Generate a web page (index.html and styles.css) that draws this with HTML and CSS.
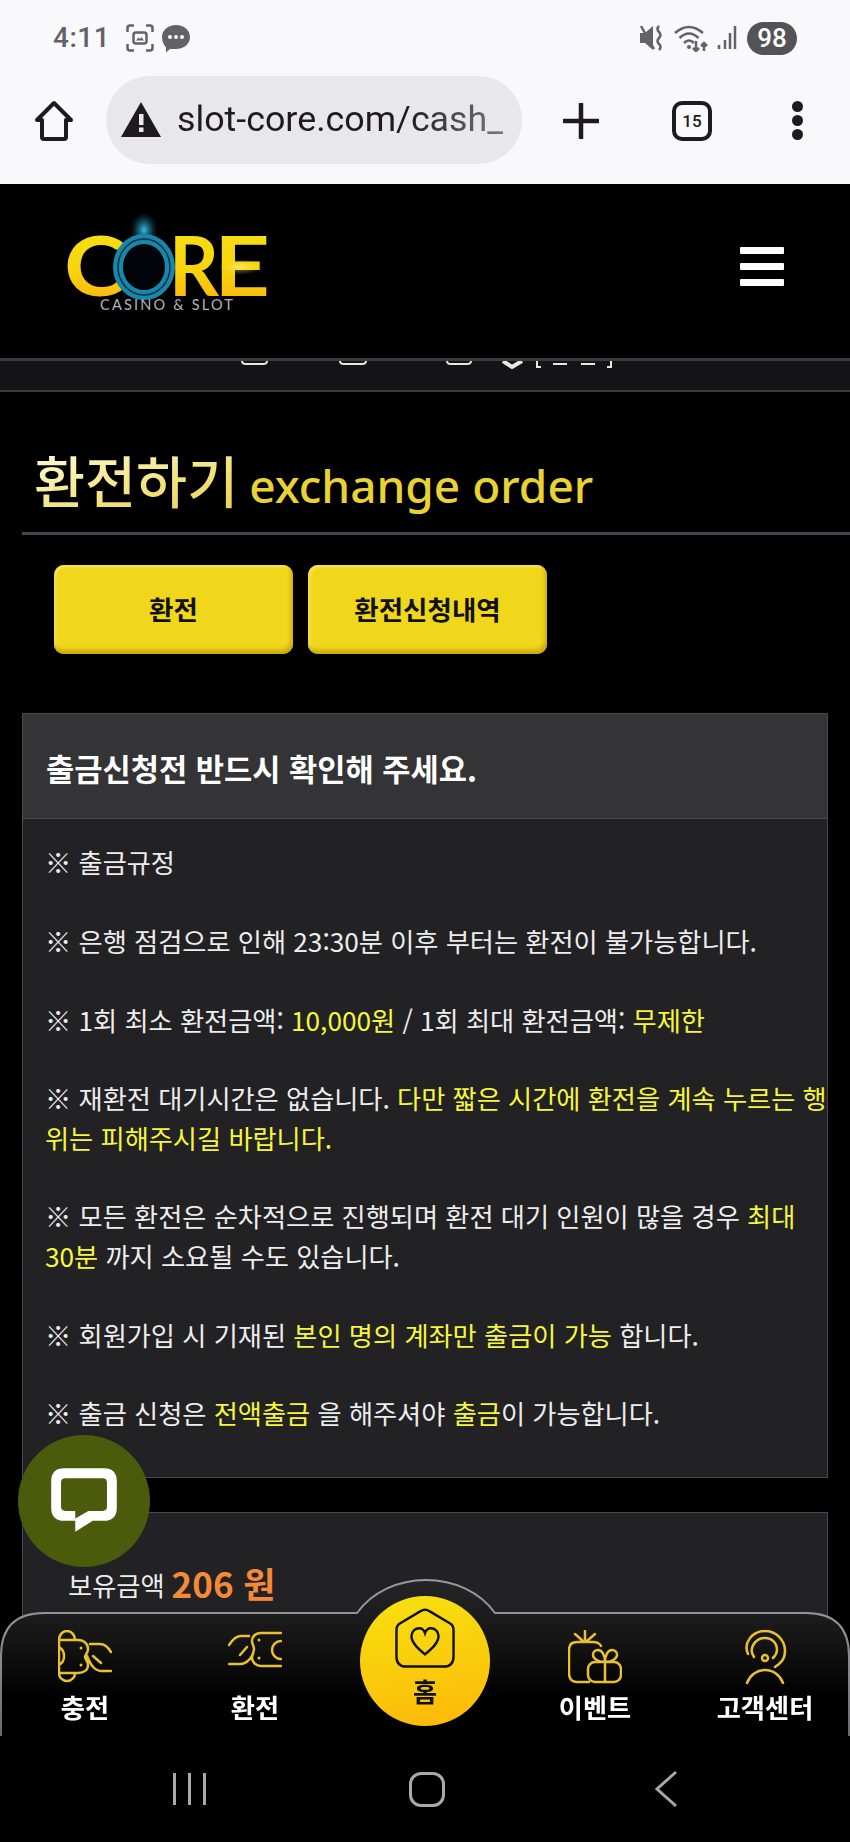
FILE: index.html
```html
<!DOCTYPE html>
<html lang="ko">
<head>
<meta charset="utf-8">
<title>환전하기</title>
<link rel="stylesheet" href="styles.css">
</head>
<body>
<div class="chrome">
  <div class="status">
    <div class="status-left">
      <span class="clock">4:11</span>
      <svg class="st-shot" viewBox="0 0 28 28"><path d="M1.5 8V4Q1.5 1.5 4 1.5H8M20 1.5H24Q26.500 1.500 26.500 4V8M26.500 20V24Q26.500 26.500 24 26.500H20M8 26.500H4Q1.500 26.500 1.500 24V20"/><rect x="7.500" y="8.500" width="13" height="11" rx="2.500"/><path class="fill" d="M10 16.500l2.500-3 1.500 1.500 1.500-2 2.500 3.500z"/></svg>
      <svg class="st-msg" viewBox="0 0 30 29"><path class="bubble" d="M15 1C23 1 29 6 29 13S23 25 15 25H9L5 28.500V23.500C3 21 1 17.500 1 13 1 6 7 1 15 1Z"/><circle cx="9" cy="13" r="2" fill="#f9f8fb"/><circle cx="15" cy="13" r="2" fill="#f9f8fb"/><circle cx="21" cy="13" r="2" fill="#f9f8fb"/></svg>
    </div>
    <div class="status-right">
      <svg class="st-mute" viewBox="0 0 24 26"><path class="fill" d="M0 8H5L13 1V25L5 18H0Z"/><path class="line" d="M1 1L14 24M19 1Q16 4 19 7T19 13T19 19T19 25"/></svg>
      <svg class="st-wifi" viewBox="0 0 35 28"><path class="line" d="M1 9Q15-3 29 9M5.500 14Q15 5 24.500 14M10 19Q15 14 20 19"/><circle class="fill" cx="15" cy="23" r="2"/><path class="line" d="M22 17V27M19 24L22 27 25 24M30 27V19M27 22L30 19 33 22"/></svg>
      <svg class="st-sig" viewBox="0 0 20 26"><path class="line" d="M2 20V24M8 15V24M13 8V24M18 1V24"/></svg>
      <span class="battery">98</span>
    </div>
  </div>
  <div class="toolbar">
    <svg class="tb-home" viewBox="0 0 42 42"><path d="M21 3L38 20H33V37Q33 39 31 39H11Q9 39 9 37V20H4Z"/></svg>
    <div class="url">
      <svg class="tb-warn" viewBox="0 0 40 36"><path fill="#1d1b20" d="M20 0L40 35H0Z"/><rect x="18" y="12" width="4.500" height="11" fill="#e8e7ea"/><rect x="18" y="25.500" width="4.500" height="4.500" fill="#e8e7ea"/></svg>
      <span class="url-text">slot-core.com/cash_</span>
    </div>
    <svg class="tb-plus" viewBox="0 0 36 36"><path d="M18 1V35M1 18H35"/></svg>
    <span class="tabs">15</span>
    <span class="dots"><i></i><i></i><i></i></span>
  </div>
</div>

<header class="site-head">
  <svg class="logo" viewBox="0 0 210 90" role="img" aria-label="CORE Casino &amp; Slot">
    <defs>
      <linearGradient id="gold" x1="0" y1="0" x2="0" y2="1"><stop offset="0" stop-color="#f4e413"/><stop offset=".55" stop-color="#f8d40e"/><stop offset="1" stop-color="#fcae0c"/></linearGradient>
      <radialGradient id="glow"><stop offset="0" stop-color="#3bbbe6"/><stop offset=".5" stop-color="#14627f" stop-opacity=".7"/><stop offset="1" stop-color="#0a3040" stop-opacity="0"/></radialGradient>
      <radialGradient id="flare"><stop offset="0" stop-color="#fff6b0"/><stop offset="1" stop-color="#f8d40e" stop-opacity="0"/></radialGradient>
    </defs>
    <ellipse cx="76" cy="-8" rx="14" ry="18" fill="url(#glow)"/>
    <text class="logo-l" x="-4" y="58" textLength="62" lengthAdjust="spacingAndGlyphs" fill="url(#gold)">C</text>
    <text class="logo-l" x="101" y="58" textLength="50" lengthAdjust="spacingAndGlyphs" fill="url(#gold)">R</text>
    <text class="logo-l" x="146" y="58" textLength="56" lengthAdjust="spacingAndGlyphs" fill="url(#gold)">E</text>
    <ellipse cx="76" cy="29" rx="26" ry="28" fill="#02040a" stroke="#1788ac" stroke-width="10"/>
    <ellipse cx="76" cy="29" rx="26" ry="28" fill="none" stroke="#08303f" stroke-width="1.500"/>
    <ellipse cx="172" cy="29" rx="22" ry="8" fill="url(#flare)" opacity=".55"/>
    <text class="logo-s" x="32" y="72">CASINO &amp; SLOT</text>
  </svg>
  <span class="burger"><i></i><i></i><i></i></span>
</header>
<div class="strip">
  <svg class="strip-marks" viewBox="0 0 380 8"><path d="M1 0Q1 3 5 3H22Q26 3 26 0M99 0Q99 3 103 3H121Q125 3 125 0M206 0Q206 3 210 3H226Q230 3 230 0"/><path class="thick" d="M262 0L271 6 281 0"/><path d="M296 0V6H300M312 3H326M340 3H354M366 6H370V0"/></svg>
</div>

<main class="page">
  <h1 class="title"><span class="title-ko">환전하기</span> <span class="title-en">exchange order</span></h1>
  <div class="tabs-row">
    <button class="gold-btn">환전</button>
    <button class="gold-btn">환전신청내역</button>
  </div>
  <section class="panel">
    <h2 class="panel-head">출금신청전 반드시 확인해 주세요.</h2>
    <div class="panel-body">
      <p>※ 출금규정</p>
      <p>※ 은행 점검으로 인해 23:30분 이후 부터는 환전이 불가능합니다.</p>
      <p>※ 1회 최소 환전금액: <em>10,000원</em> / 1회 최대 환전금액: <em>무제한</em></p>
      <p>※ 재환전 대기시간은 없습니다. <em>다만 짧은 시간에 환전을 계속 누르는 행<wbr>위는 피해주시길 바랍니다.</em></p>
      <p>※ 모든 환전은 순차적으로 진행되며 환전 대기 인원이 많을 경우 <em>최대 <span class="nb">30분</span></em> 까지 소요될 수도 있습니다.</p>
      <p>※ 회원가입 시 기재된 <em>본인 명의 계좌만 출금이 가능</em> 합니다.</p>
      <p>※ 출금 신청은 <em>전액출금</em> 을 해주셔야 <em>출금</em>이 가능합니다.</p>
    </div>
  </section>
  <section class="balance">
    <span class="bal-label">보유금액</span> <strong class="bal-value">206 원</strong>
  </section>
</main>

<button class="chat" aria-label="채팅">
  <svg viewBox="0 0 64 62"><path fill-rule="evenodd" d="M14 2H50Q62 2 62 14V38Q62 50 50 50H40L24 60V50H14Q2 50 2 38V14Q2 2 14 2ZM15 11Q11 11 11 15V37Q11 41 15 41H24V48L36 41H49Q53 41 53 37V15Q53 11 49 11Z"/></svg>
</button>

<div class="bottom">
  <nav class="tabbar">
    <svg class="tabbar-bg" viewBox="0 0 850 160" preserveAspectRatio="none">
      <defs>
        <linearGradient id="barFill" x1="0" y1="0" x2="0" y2="1"><stop offset="0" stop-color="#262628"/><stop offset=".4" stop-color="#141415"/><stop offset=".75" stop-color="#000"/></linearGradient>
        <linearGradient id="barStroke" x1="0" y1="0" x2="0" y2="1"><stop offset="0" stop-color="#9a9a9c"/><stop offset=".5" stop-color="#8a8a8c"/><stop offset="1" stop-color="#6a6a6c"/></linearGradient>
      </defs>
      <path fill="url(#barFill)" stroke="url(#barStroke)" stroke-width="2" d="M1 160V80Q1 37 44 37H357C372 16 398 4 426 4S480 16 495 37H806Q849 37 849 80V160"/>
    </svg>
    <a class="tab">
      <svg class="ico" viewBox="0 0 54 54"><path d="M1 10V43A8 8 0 0 0 17 43M1 10A8 9 0 0 1 17 10M1 10H20C26 10 30 14 30 19 30 23 27 25 27 27 27 29 30 31 30 35 30 40 26 43 20 43H1M1 17A9 10 0 0 1 1 35M32 14H42Q48 14 53 22M53 41H44C37 41 33 36 29 26M35 26L43 33"/><circle class="d" cx="23" cy="18" r="1.500"/><circle class="d" cx="23" cy="35" r="1.500"/></svg>
      <span>충전</span>
    </a>
    <a class="tab">
      <svg class="ico" viewBox="0 0 54 54"><path d="M53 3H33C27 3 24 7 24 11 24 14 26 16 26 19 26 22 24 24 24 28 24 32 28 36 33 36H53M53 11A9 9 0 0 0 53 29M1 15Q7 6 13 6H21M1 34H12C18 34 22 30 25 24M12 25L19 17"/><circle class="d" cx="31" cy="10" r="1.500"/><circle class="d" cx="31" cy="28" r="1.500"/></svg>
      <span>환전</span>
    </a>
    <a class="tab tab-home">
      <svg class="ico-home" viewBox="0 0 62 62"><path d="M26 3.500Q31 0 36 3.500L57 16Q60.500 18 60.500 23V50Q60.500 60.500 50 60.500H12Q1.500 60.500 1.500 50V23Q1.500 18 5 16Z" stroke-linejoin="round"/><path d="M31 48C24 42 17 36 17 29 17 24 21 21 25 21 28 21 30 23 31 26 32 23 34 21 37 21 41 21 45 24 45 29 45 36 38 42 31 48Z"/></svg>
      <span>홈</span>
    </a>
    <a class="tab">
      <svg class="ico" viewBox="0 0 54 54"><path d="M33 16Q31 12 25 12H9Q1 12 1 20V43Q1 52 9 52H21M17 1V11M7 4L15 11M27 4L19 11"/><rect x="20" y="32" width="33" height="20" rx="7"/><path d="M37 32V52M37 32C31 32 25 29 25 25 25 22 27 20 30 20 34 20 37 25 37 32ZM37 32C43 32 49 29 49 25 49 22 47 20 44 20 40 20 37 25 37 32Z"/></svg>
      <span>이벤트</span>
    </a>
    <a class="tab">
      <svg class="ico" viewBox="0 0 54 54"><path d="M10 24C5 13 14 1 27 1 38 1 47 10 47 21 47 29 43 33 37 37M16 27C10 19 17 8 27 8 34 8 39 13 39 20 39 24 37 26 35 28"/><circle cx="27" cy="28" r="3"/><path d="M9 53C12 45 19 40 27 40S42 45 45 53"/></svg>
      <span>고객센터</span>
    </a>
  </nav>
  <div class="sysnav">
    <span class="sys-recent"><i></i><i></i><i></i></span>
    <span class="sys-home"></span>
    <svg class="sys-back" viewBox="0 0 24 38"><path d="M22 2L3 19 22 36"/></svg>
  </div>
</div>
</body>
</html>
```
FILE: styles.css
```css
* { box-sizing: border-box; }
html, body { margin: 0; padding: 0; }
body {
  width: 850px;
  height: 1842px;
  overflow: hidden;
  background: #000;
  font-family: "Noto Sans CJK KR", "Noto Sans", sans-serif;
  color: #ededed;
}

/* browser chrome */
.chrome { height: 184px; background: #f9f8fb; }
.status {
  height: 76px;
  display: flex;
  justify-content: space-between;
  align-items: center;
  padding: 0 53px 0 53px;
}
.status-left, .status-right { display: flex; align-items: center; }
.clock { font: 500 28px/1 Roboto, sans-serif; color: #636266; letter-spacing: .5px; }
.st-shot { width: 28px; height: 28px; margin-left: 16px; fill: none; stroke: #636266; stroke-width: 2.5; }
.st-shot .fill { fill: #636266; stroke: none; }
.st-msg { width: 30px; height: 29px; margin-left: 7px; }
.bubble { fill: #636266; }
.status-right .fill { fill: #636266; }
.status-right .line { fill: none; stroke: #636266; stroke-width: 2.5; }
.st-mute { width: 24px; height: 26px; }
.st-wifi { width: 35px; height: 28px; margin-left: 10px; }
.st-sig { width: 20px; height: 26px; margin-left: 8px; }
.battery {
  width: 50px; height: 33px; margin-left: 10px;
  border-radius: 17px;
  background: #545357; color: #fff;
  font: 500 26px/33px Roboto, sans-serif;
  text-align: center;
}
.toolbar {
  height: 108px;
  display: flex;
  align-items: flex-start;
  padding-left: 33px;
}
.tb-home { width: 42px; height: 42px; margin-top: 24px; fill: none; stroke: #1d1b20; stroke-width: 4; stroke-linejoin: round; }
.url {
  width: 416px; height: 88px; margin-left: 31px;
  border-radius: 44px;
  background: #e8e7ea;
  display: flex; align-items: center;
  padding-left: 15px;
}
.tb-warn { width: 40px; height: 36px; flex: none; }
.url-text {
  margin-left: 16px;
  font: 400 35.800px/1 Roboto, sans-serif;
  background: linear-gradient(90deg, #1d1b20 70%, #77767b 100%);
  -webkit-background-clip: text;
  background-clip: text;
  color: transparent;
  white-space: nowrap;
}
.tb-plus { width: 36px; height: 36px; margin: 27px 0 0 41px; fill: none; stroke: #1d1b20; stroke-width: 4.500; stroke-linecap: round; }
.tabs {
  width: 40px; height: 40px; margin: 25px 0 0 73px;
  border: 4px solid #1d1b20; border-radius: 10px;
  font: 500 17px/32px Roboto, sans-serif; color: #1d1b20;
  text-align: center;
}
.dots { display: flex; flex-direction: column; gap: 3px; margin: 25px 0 0 80px; }
.dots i { width: 11px; height: 11px; border-radius: 50%; background: #1d1b20; }

/* site header */
.site-head {
  height: 177px;
  padding: 35px 66px 0 68px;
  display: flex; justify-content: space-between; align-items: flex-start;
  background: #000;
  border-bottom: 3px solid #3c3c40;
}
.logo { width: 210px; height: 90px; margin-top: 19px; overflow: visible; }
.logo-l { font: 700 82px "Lato", sans-serif; }
.logo-s { font: 400 14.500px "Lato", sans-serif; fill: #b4b4b6; letter-spacing: 2.200px; }
.burger { display: flex; flex-direction: column; gap: 9px; margin-top: 28px; }
.burger i { width: 44px; height: 7px; border-radius: 1px; background: #fff; }
.strip {
  height: 31px;
  background: #141418;
  border-bottom: 2px solid #3a3a3e;
  padding-left: 241px;
}
.strip-marks { display: block; width: 380px; height: 8px; fill: none; stroke: #e8e8e8; stroke-width: 2; }
.strip-marks .thick { stroke-width: 4; }

/* content */
.page { padding-left: 22px; }
.title {
  margin: 0;
  height: 143px;
  padding: 54px 0 0 12px;
  border-bottom: 3px solid #48484c;
  font-weight: 400;
  line-height: 66px;
  white-space: nowrap;
}
.title-ko {
  font-size: 55.500px;
  font-weight: 500;
  background: linear-gradient(165deg, #fffbd6 10%, #f2e27a 60%, #e7cd4c 100%);
  -webkit-background-clip: text;
  background-clip: text;
  color: transparent;
}
.title-en { font: 500 46px/66px "Noto Sans", sans-serif; color: #e9d232; margin-left: 2px; }
.tabs-row { display: flex; gap: 15px; padding: 30px 0 0 32px; }
.gold-btn {
  width: 239px; height: 89px;
  border: 0; border-radius: 10px;
  background: #f0d71b;
  box-shadow: inset -2px -4px 4px #c9a80f, inset 2px 2px 3px #f8e65a;
  font: 700 26.500px/1 "Noto Sans CJK KR", sans-serif;
  color: #111;
}
.panel {
  width: 806px;
  margin-top: 59px;
  border: 1px solid #4a4a4c;
  background: #222124;
}
.panel-head {
  margin: 0;
  height: 105px;
  padding: 4px 0 0 23px;
  background: #343336;
  border-bottom: 1px solid #4a4a4c;
  font-size: 30.700px;
  font-weight: 700;
  line-height: 100px;
  color: #fff;
}
.panel-body {
  margin-right: -8px;
  padding: 24px 0 43px 22px;
  font-size: 26.250px;
  line-height: 39.375px;
  letter-spacing: -.04px;
}
.panel-body p { margin: 0 0 39.375px; }
.panel-body p:last-child { margin-bottom: 0; }
.panel-body em { font-style: normal; color: #f6f63c; }
.nb { white-space: nowrap; }
.balance {
  width: 806px;
  height: 360px;
  margin-top: 34px;
  border: 1px solid #4a4a4c;
  background: #222124;
  padding: 45px 0 0 45px;
  display: flex;
  gap: 7px;
  align-items: flex-start;
}
.bal-label { font-size: 26.250px; line-height: 50px; margin-top: 2px; }
.bal-value { font-size: 35px; line-height: 50px; font-weight: 700; color: #f48a38; }

/* floating */
.chat {
  position: fixed; left: 18px; top: 1435px;
  width: 132px; height: 132px;
  border: 0; padding: 0; border-radius: 50%;
  background: #4c5a0c;
  display: flex; align-items: center; justify-content: center;
}
.chat svg { width: 70px; height: 68px; margin-bottom: 2px; fill: #fff; }

.bottom { position: fixed; left: 0; right: 0; bottom: 0; height: 266px; background: transparent; }
.tabbar {
  position: relative;
  height: 160px;
  display: grid;
  grid-template-columns: repeat(5, 170px);
}
.tabbar-bg { position: absolute; left: 0; top: 0; width: 850px; height: 160px; }
.tab {
  position: relative;
  display: flex; flex-direction: column; align-items: center;
  padding-top: 54px;
  color: #fff;
  font-size: 26.250px; font-weight: 700; line-height: 34px;
}
.ico { width: 54px; height: 54px; fill: none; stroke: #e9c030; stroke-width: 2.500; stroke-linecap: round; stroke-linejoin: round; margin-bottom: 6px; }
.ico .d { fill: #e9c030; stroke: none; }
.tab-home {
  width: 130px; height: 130px; margin: 20px auto 0;
  padding-top: 12px;
  border-radius: 50%;
  background: linear-gradient(170deg, #f6e210, #fdb808);
  color: #111;
  justify-self: center;
}
.ico-home { width: 60px; height: 60px; fill: none; stroke: #111; stroke-width: 2.500; margin-bottom: 6px; }
.sysnav { height: 106px; background: #000; position: relative; }
.sysnav { display: flex; align-items: flex-start; padding: 37px 0 0 173px; }
.sys-recent { display: flex; gap: 12px; }
.sys-recent i { width: 3px; height: 32px; background: #a9a9aa; }
.sys-home { width: 36px; height: 35px; margin: -1px 0 0 203px; border: 3px solid #a9a9aa; border-radius: 12px; }
.sys-back { width: 24px; height: 38px; margin: -3px 0 0 209px; fill: none; stroke: #a9a9aa; stroke-width: 3; }
```
